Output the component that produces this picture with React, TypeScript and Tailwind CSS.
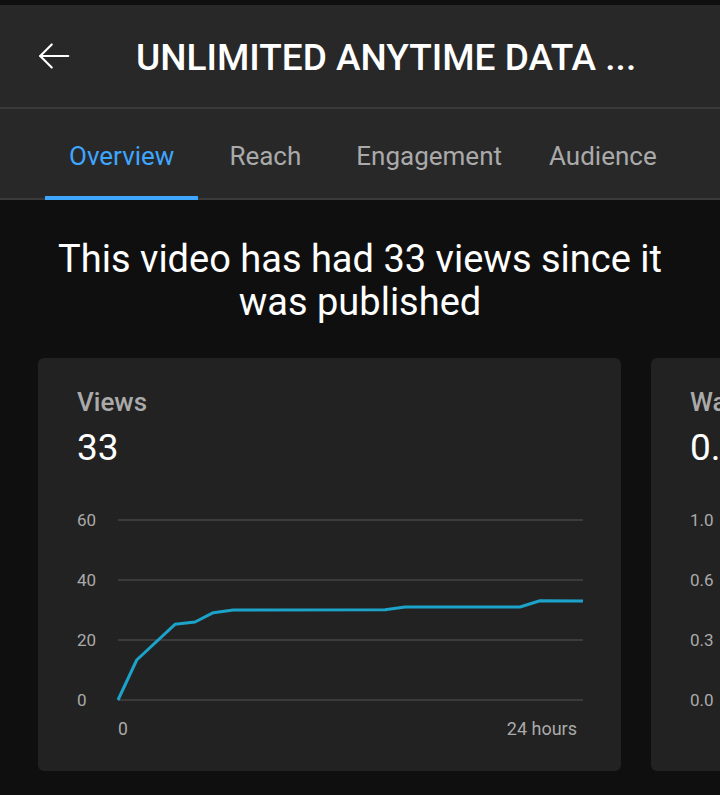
import React from "react";

const font = { fontFamily: "Roboto, 'Noto Sans', sans-serif" };

function ViewsChart() {
  const pts: [number, number][] = [
    [80, 199], [98.7, 159], [137, 123.3], [157, 121], [175.3, 111.7], [195.3, 109],
    [347, 108.7], [367, 106], [482, 106], [502, 99.7], [545, 100],
  ];
  const grid = [19, 79, 139, 199];
  const labels = ["60", "40", "20", "0"];
  return (
    <svg width="583" height="260" viewBox="0 0 583 260" className="block">
      {grid.map((y, i) => (
        <g key={y}>
          <line x1="80" x2="545" y1={y} y2={y} stroke="#3b3b3b" strokeWidth="2" />
          <text x="39" y={y + 6} fill="#aaaaaa" fontSize="17" fontFamily="Roboto, sans-serif">
            {labels[i]}
          </text>
        </g>
      ))}
      <polyline
        points={pts.map((p) => p.join(",")).join(" ")}
        fill="none"
        stroke="#1ba3c9"
        strokeWidth="3"
        strokeLinejoin="round"
      />
      <text x="80" y="234" fill="#aaaaaa" fontSize="17.5" fontFamily="Roboto, sans-serif">0</text>
      <text x="539" y="234" fill="#aaaaaa" fontSize="18" textAnchor="end" fontFamily="Roboto, sans-serif">24 hours</text>
    </svg>
  );
}

function WatchChart() {
  const grid = [19, 79, 139, 199];
  const labels = ["1.0", "0.6", "0.3", "0.0"];
  return (
    <svg width="583" height="260" viewBox="0 0 583 260" className="block">
      {grid.map((y, i) => (
        <g key={y}>
          <line x1="80" x2="545" y1={y} y2={y} stroke="#3b3b3b" strokeWidth="2" />
          <text x="39" y={y + 6} fill="#aaaaaa" fontSize="17" fontFamily="Roboto, sans-serif">
            {labels[i]}
          </text>
        </g>
      ))}
    </svg>
  );
}

function Card({ title, value, chart }: { title: string; value: string; chart: React.ReactNode }) {
  return (
    <div className="w-[583px] h-[413px] shrink-0 rounded-[6px] bg-[#222222] flex flex-col">
      <div className="pl-[39px] pt-[29px]">
        <div className="text-[26px] leading-[30px] font-medium text-[#aaaaaa] whitespace-nowrap">{title}</div>
        <div className="text-[37px] leading-[40px] text-white mt-[11px]">{value}</div>
      </div>
      <div className="mt-[33px]">{chart}</div>
    </div>
  );
}

export default function App() {
  return (
    <div className="w-[720px] h-[795px] overflow-hidden bg-[#0f0f0f] pt-[5px]" style={font}>
      <div className="h-[104px] bg-[#282828] flex items-center border-b-2 border-[#3a3a3a]">
        <div className="w-[136px] flex items-center pl-[36px]">
          <svg width="36" height="36" viewBox="0 0 24 24" fill="none" stroke="#ffffff" strokeWidth="1.4" strokeLinecap="round" strokeLinejoin="round">
            <path d="M21.5 12H2.8" />
            <path d="M10.5 4.3L2.8 12l7.7 7.7" />
          </svg>
        </div>
        <div className="text-[37px] font-medium text-white leading-none whitespace-nowrap pt-[2px]">
          UNLIMITED ANYTIME DATA ...
        </div>
      </div>
      <div className="h-[91px] bg-[#282828] flex items-stretch pl-[45px] border-b-2 border-[#3a3a3a] text-[26px] whitespace-nowrap">
        <div className="relative flex items-center pt-[6px] px-[24px] text-[#3ea6ff]">
          Overview
          <div className="absolute left-0 right-0 -bottom-[2px] h-[4px] bg-[#3ea6ff]" />
        </div>
        <div className="flex items-center pt-[6px] ml-[31px] text-[#aaaaaa]">Reach</div>
        <div className="flex items-center pt-[6px] ml-[55px] text-[#aaaaaa]">Engagement</div>
        <div className="flex items-center pt-[6px] ml-[47px] text-[#aaaaaa]">Audience</div>
      </div>
      <div className="pt-[38px] px-[10px] text-center text-[38px] leading-[43px] text-white">
        This video has had 33 views since it
        <br />
        was published
      </div>
      <div className="flex gap-[30px] pl-[38px] mt-[34px]">
        <Card title="Views" value="33" chart={<ViewsChart />} />
        <Card title="Watch time (hours)" value="0.0" chart={<WatchChart />} />
      </div>
    </div>
  );
}
